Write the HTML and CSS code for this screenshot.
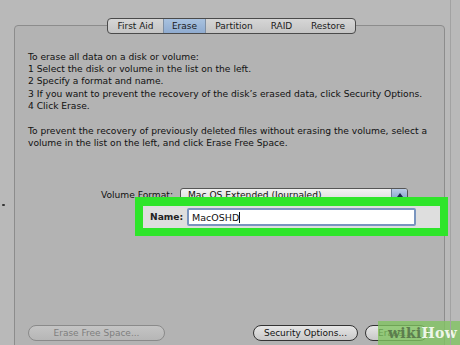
FILE: index.html
```html
<!DOCTYPE html>
<html>
<head>
<meta charset="utf-8">
<link rel="stylesheet" href="styles.css">
</head>
<body>
<div class="window">
  <span class="cursor-mark"></span>
  <div class="tabs">
    <div class="tab t1">First Aid</div>
    <div class="tab t2 selected">Erase</div>
    <div class="tab t3">Partition</div>
    <div class="tab t4">RAID</div>
    <div class="tab t5">Restore</div>
  </div>
  <div class="panel">
    <div class="p1">
      <div>To erase all data on a disk or volume:</div>
      <div>1 Select the disk or volume in the list on the left.</div>
      <div>2 Specify a format and name.</div>
      <div>3 If you want to prevent the recovery of the disk’s erased data, click Security Options.</div>
      <div>4 Click Erase.</div>
    </div>
    <div class="p2">
      <div>To prevent the recovery of previously deleted files without erasing the volume, select a</div>
      <div>volume in the list on the left, and click Erase Free Space.</div>
    </div>
    <div class="row-format">
      <span class="label">Volume Format:</span>
      <div class="popup"><span>Mac OS Extended (Journaled)</span><span class="popup-arrow"><svg width="8" height="6" viewBox="0 0 8 6"><path d="M4 1 L7 5 L1 5 Z" fill="#1a2a4a"/></svg></span></div>
    </div>
    <div class="highlight">
      <div class="name-row">
        <span class="name-label">Name:</span>
        <div class="name-input">MacOSHD<span class="caret"></span></div>
      </div>
    </div>
    <div class="buttons">
      <div class="btn disabled wide">Erase Free Space...</div>
      <div class="spacer"></div>
      <div class="btn sec">Security Options...</div>
      <div class="btn erase">Erase...</div>
    </div>
  </div>
  <div class="watermark"><span class="wiki">wiki</span><span class="how">How</span></div>
</div>
</body>
</html>
```

FILE: styles.css
```css
html, body {
  margin: 0;
  padding: 0;
}
body {
  width: 460px;
  height: 345px;
  overflow: hidden;
  background: #b9b9b9;
  font-family: "DejaVu Sans", "Liberation Sans", sans-serif;
  font-size: 9.15px;
  color: #111;
}
.window {
  position: relative;
  width: 460px;
  height: 345px;
  padding-top: 18px;
  box-sizing: border-box;
  overflow: hidden;
}
.window::after {
  content: "";
  position: absolute;
  left: 450px;
  top: 0;
  width: 1px;
  height: 345px;
  background: #a2a2a2;
}
.cursor-mark {
  position: absolute;
  left: 2px;
  top: 204px;
  width: 3px;
  height: 2px;
  background: #333;
  border-radius: 1px;
}
.tabs {
  position: relative;
  z-index: 2;
  display: flex;
  margin-left: 107px;
  width: 247px;
  height: 14px;
  border: 1px solid #4a4a4a;
  border-radius: 4px;
  background: linear-gradient(#d6d6d6, #c4c4c4);
  overflow: hidden;
}
.tab {
  display: flex;
  align-items: center;
  justify-content: center;
  font-size: 9px;
  color: #1a1a1a;
}
.t1 { width: 55px; }
.t2 { width: 43px; }
.t3 { width: 56px; }
.t4 { width: 39px; }
.t5 { width: 54px; }
.tab.selected {
  background: linear-gradient(#a9c2df, #8fabd0);
  border-left: 1px solid #7f8fa3;
  border-right: 1px solid #7f8fa3;
  box-sizing: border-box;
}
.panel {
  position: relative;
  margin-top: -9px;
  margin-left: 14px;
  width: 431px;
  height: 340px;
  box-sizing: border-box;
  border: 1px solid #8c8c8c;
  border-radius: 4px;
  background: #b3b3b3;
  padding: 25px 0 23px 13px;
  display: flex;
  flex-direction: column;
}
.p1, .p2 {
  line-height: 12.2px;
  white-space: nowrap;
}
.p2 {
  margin-top: 13px;
}
.row-format {
  display: flex;
  align-items: center;
  margin-top: 39px;
  height: 14px;
}
.label {
  width: 152px;
  text-align: right;
  padding-right: 7px;
  box-sizing: border-box;
}
.popup {
  display: flex;
  align-items: center;
  justify-content: space-between;
  width: 228px;
  height: 14px;
  box-sizing: border-box;
  border: 1px solid #555;
  border-radius: 3px;
  background: linear-gradient(#f2f2f2, #dcdcdc);
  padding-left: 7px;
  overflow: hidden;
}
.popup-arrow {
  display: flex;
  align-items: center;
  justify-content: center;
  width: 15px;
  height: 12px;
  background: linear-gradient(#b9cce6, #7d9cc7);
  border-left: 1px solid #6a7c96;
}
.highlight {
  position: relative;
  z-index: 3;
  margin-top: -5px;
  margin-left: 107px;
  width: 313px;
  height: 39px;
  box-sizing: border-box;
  background: #2ee52a;
  padding: 9px 8px 8px 8px;
}
.name-row {
  display: flex;
  align-items: center;
  height: 22px;
  background: #dedede;
}
.name-label {
  width: 44px;
  padding-left: 7px;
  box-sizing: border-box;
  font-weight: bold;
  color: #222;
}
.name-input {
  display: flex;
  align-items: center;
  width: 229px;
  height: 18px;
  box-sizing: border-box;
  background: #fff;
  border: 2px solid #7a95bf;
  border-radius: 2px;
  padding-left: 3px;
  font-size: 9.5px;
  color: #111;
}
.caret {
  display: inline-block;
  width: 1px;
  height: 11px;
  background: #111;
}
.buttons {
  margin-top: auto;
  display: flex;
  align-items: center;
  padding-right: 16px;
}
.spacer {
  flex: 1;
}
.btn {
  height: 16px;
  box-sizing: border-box;
  border: 1px solid #333;
  border-radius: 8px;
  background: linear-gradient(#e6e6e6, #c8c8c8);
  display: flex;
  align-items: center;
  justify-content: center;
  font-size: 9px;
  color: #111;
}
.btn.wide { width: 137px; }
.btn.sec { width: 105px; margin-right: 7px; }
.btn.erase { width: 63px; justify-content: flex-start; padding-left: 12px; }
.btn.disabled {
  border-color: #8a8a8a;
  color: #7e7e7e;
  background: linear-gradient(#c4c4c4, #b6b6b6);
}
.watermark {
  position: absolute;
  right: 0;
  bottom: 0;
  width: 82px;
  height: 24px;
  background: rgba(128, 196, 96, 0.78);
  display: flex;
  align-items: center;
  justify-content: flex-start;
  padding-left: 10px;
  box-sizing: border-box;
  font-family: "DejaVu Serif", "Liberation Serif", serif;
  font-weight: bold;
  font-size: 14px;
  letter-spacing: 0.3px;
}
.wiki { color: #5c7d4e; }
.how { color: #eef6e8; }
```
